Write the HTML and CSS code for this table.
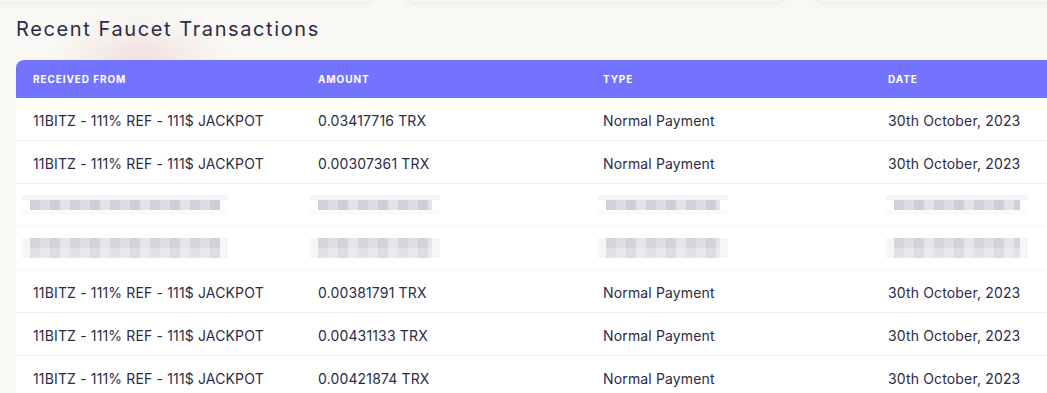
FILE: index.html
```html
<!DOCTYPE html>
<html lang="en">
<head>
    <meta charset="UTF-8">
    <meta name="viewport" content="width=device-width, initial-scale=1.0">
    <title>Recent Faucet Transactions</title>
    <link rel="stylesheet" href="styles.css">
</head>
<body>
    <div class="top-cards">
        <div class="card"></div>
        <div class="card"></div>
        <div class="card"></div>
    </div>
    <div class="section">
        <div class="glow"></div>
        <h2>Recent Faucet Transactions</h2>
        <div class="table">
            <div class="row head">
                <div class="cell">Received From</div>
                <div class="cell">Amount</div>
                <div class="cell">Type</div>
                <div class="cell">Date</div>
            </div>
            <div class="row">
                <div class="cell">11BITZ - 111% REF - 111$ JACKPOT</div>
                <div class="cell">0.03417716 TRX</div>
                <div class="cell">Normal Payment</div>
                <div class="cell">30th October, 2023</div>
            </div>
            <div class="row">
                <div class="cell">11BITZ - 111% REF - 111$ JACKPOT</div>
                <div class="cell">0.00307361 TRX</div>
                <div class="cell">Normal Payment</div>
                <div class="cell">30th October, 2023</div>
            </div>
            <div class="row hidden-row">
                <div class="cell"><span class="pix w1"></span></div>
                <div class="cell"><span class="pix w2"></span></div>
                <div class="cell"><span class="pix w3"></span></div>
                <div class="cell"><span class="pix w4"></span></div>
            </div>
            <div class="row hidden-row second">
                <div class="cell"><span class="pix w1"></span></div>
                <div class="cell"><span class="pix w2"></span></div>
                <div class="cell"><span class="pix w3"></span></div>
                <div class="cell"><span class="pix w4"></span></div>
            </div>
            <div class="row">
                <div class="cell">11BITZ - 111% REF - 111$ JACKPOT</div>
                <div class="cell">0.00381791 TRX</div>
                <div class="cell">Normal Payment</div>
                <div class="cell">30th October, 2023</div>
            </div>
            <div class="row">
                <div class="cell">11BITZ - 111% REF - 111$ JACKPOT</div>
                <div class="cell">0.00431133 TRX</div>
                <div class="cell">Normal Payment</div>
                <div class="cell">30th October, 2023</div>
            </div>
            <div class="row">
                <div class="cell">11BITZ - 111% REF - 111$ JACKPOT</div>
                <div class="cell">0.00421874 TRX</div>
                <div class="cell">Normal Payment</div>
                <div class="cell">30th October, 2023</div>
            </div>
        </div>
    </div>
</body>
</html>
```

FILE: styles.css
```css
html {
    overflow: hidden;
}

body {
    font-family: 'Inter', sans-serif;
    background: #f9f8f4;
    color: #2c2b46;
    margin: 0;
    padding: 0;
}

.top-cards {
    display: flex;
    gap: 30px;
    margin: -40px 0 0 -5px;
}

.card {
    flex: none;
    width: 380px;
    height: 42px;
    background: #f9f8f4;
    border-radius: 10px;
    box-shadow: 0 2px 6px rgba(0, 0, 0, 0.06);
}

.section {
    position: relative;
    padding-left: 16px;
}

.glow {
    position: absolute;
    left: 55px;
    top: 15px;
    width: 170px;
    height: 90px;
    border-radius: 50%;
    background: radial-gradient(ellipse at center, rgba(220, 170, 170, 0.35), rgba(249, 248, 244, 0) 70%);
    filter: blur(8px);
}

h2 {
    position: relative;
    margin: 0;
    padding: 13px 0 16px;
    font-size: 20px;
    font-weight: 400;
    letter-spacing: 1.6px;
    line-height: 29px;
    color: #2c2b46;
}

.table {
    position: relative;
    width: 1140px;
    background: #fff;
    border-top-left-radius: 8px;
    overflow: hidden;
}

.row {
    display: flex;
    height: 43px;
    align-items: center;
    padding-top: 3px;
    border-bottom: 1px solid #eeeeef;
    box-sizing: border-box;
    font-size: 14px;
    letter-spacing: 0.15px;
}

.row.head {
    height: 38px;
    padding-top: 0;
    background: #7473fe;
    color: #fff;
    font-size: 10px;
    font-weight: 700;
    text-transform: uppercase;
    letter-spacing: 0.9px;
    border-bottom: none;
}

.cell {
    width: 285px;
    padding-left: 17px;
    box-sizing: border-box;
}

.hidden-row {
    padding-top: 0;
    border-bottom-color: #f6f6f7;
}

.pix {
    display: block;
    height: 20px;
    margin-left: -11px;
    background:
        linear-gradient(#f4f4f6, #f4f4f6) 0 0 / 100% 5px no-repeat,
        repeating-linear-gradient(90deg, #d2d1d9 0 10px, #dcdbe1 10px 20px, #cfced7 20px 30px, #e3e2e7 30px 40px) 8px 5px / calc(100% - 16px) 10px no-repeat,
        linear-gradient(#fafafb, #fafafb) 0 15px / 100% 5px no-repeat;
}

.second .pix {
    background:
        repeating-linear-gradient(90deg, #d6d5dc 0 10px, #dfdee4 10px 20px, #d3d2da 20px 30px, #e5e4e9 30px 40px) 8px 0 / calc(100% - 16px) 10px no-repeat,
        repeating-linear-gradient(90deg, #e2e1e6 0 10px, #e9e8ec 10px 20px, #dddce2 20px 30px, #ebeaee 30px 40px) 8px 10px / calc(100% - 16px) 10px no-repeat,
        linear-gradient(#f6f6f7, #f6f6f7) 0 0 / 100% 20px no-repeat;
}

.w1 { width: 206px; }
.w2 { width: 130px; margin-left: -8px; }
.w3 { width: 130px; margin-left: -5px; }
.w4 { width: 142px; margin-left: -2px; }
```
